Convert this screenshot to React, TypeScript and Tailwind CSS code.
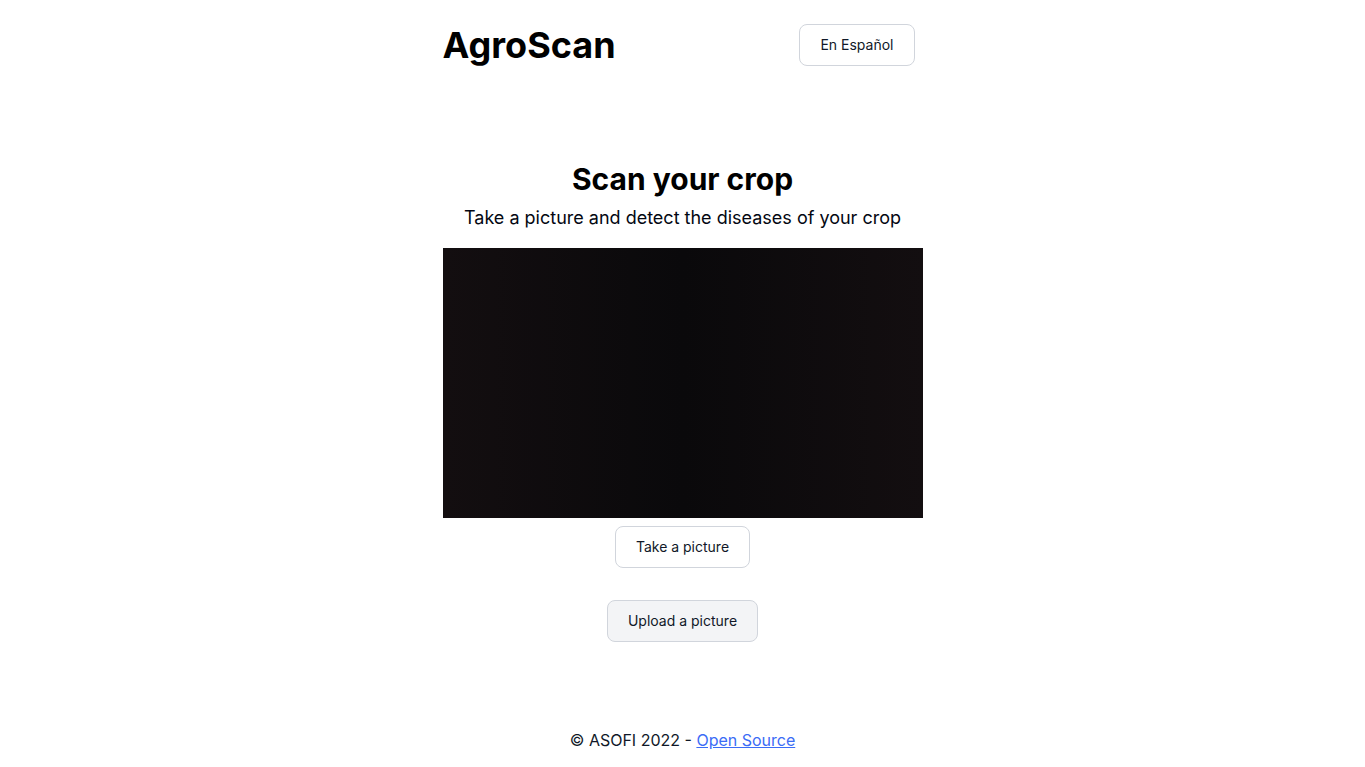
export default function App() {
  return (
    <div className="flex min-h-screen flex-col items-center bg-white font-['Inter',sans-serif] text-black">
      <div className="flex w-[480px] flex-col">
        <header className="flex items-center justify-between pr-2 pt-6">
          <h1 className="text-4xl font-bold">AgroScan</h1>
          <button className="rounded-lg border border-gray-300 bg-white px-5 py-2.5 text-sm text-gray-900">
            En Español
          </button>
        </header>

        <main className="mt-[95px] flex flex-col items-center">
          <h2 className="text-3xl font-bold">Scan your crop</h2>
          <p className="mt-[7px] text-lg text-gray-950">
            Take a picture and detect the diseases of your crop
          </p>
          <div className="mt-4 h-[270px] w-[480px] bg-gradient-to-r from-[#130e10] via-[#0a090b] to-[#130e10]" />
          <button className="mt-2 rounded-lg border border-gray-300 bg-white px-5 py-2.5 text-sm text-gray-900">
            Take a picture
          </button>
          <button className="mt-8 rounded-lg border border-gray-300 bg-gray-100 px-5 py-2.5 text-sm text-gray-900">
            Upload a picture
          </button>
        </main>
      </div>

      <footer className="mt-auto pb-[15px] text-base text-gray-900">
        © ASOFI 2022 -{" "}
        <a href="#" className="text-[#3b6cf6] underline">
          Open Source
        </a>
      </footer>
    </div>
  );
}
